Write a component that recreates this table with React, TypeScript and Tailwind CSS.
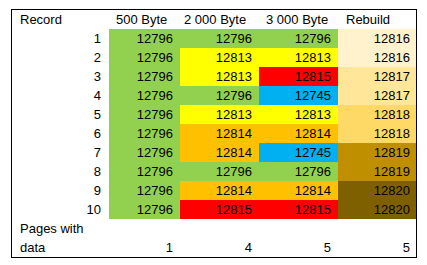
type Row = { n: number; cells: [string, string][]; rebuild: [string, string] };

const G = "bg-[#92d050]";
const Y = "bg-[#ffff00]";
const O = "bg-[#ffc000]";
const R = "bg-[#ff0000]";
const B = "bg-[#00b0f0]";

const rows: Row[] = [
  { n: 1, cells: [["12796", G], ["12796", G], ["12796", G]], rebuild: ["12816", "bg-[#fff2cc]"] },
  { n: 2, cells: [["12796", G], ["12813", Y], ["12813", Y]], rebuild: ["12816", "bg-[#fff2cc]"] },
  { n: 3, cells: [["12796", G], ["12813", Y], ["12815", R]], rebuild: ["12817", "bg-[#ffe699]"] },
  { n: 4, cells: [["12796", G], ["12796", G], ["12745", B]], rebuild: ["12817", "bg-[#ffe699]"] },
  { n: 5, cells: [["12796", G], ["12813", Y], ["12813", Y]], rebuild: ["12818", "bg-[#ffd966]"] },
  { n: 6, cells: [["12796", G], ["12814", O], ["12814", O]], rebuild: ["12818", "bg-[#ffd966]"] },
  { n: 7, cells: [["12796", G], ["12814", O], ["12745", B]], rebuild: ["12819", "bg-[#bf8f00]"] },
  { n: 8, cells: [["12796", G], ["12796", G], ["12796", G]], rebuild: ["12819", "bg-[#bf8f00]"] },
  { n: 9, cells: [["12796", G], ["12814", O], ["12814", O]], rebuild: ["12820", "bg-[#7f6000]"] },
  { n: 10, cells: [["12796", G], ["12815", R], ["12815", R]], rebuild: ["12820", "bg-[#7f6000]"] },
];

export default function App() {
  return (
    <div className="w-[427px] h-[265px] bg-white pt-[9px] pl-[11px] font-['Liberation_Sans',Arial,sans-serif] text-[13px] text-black">
      <div className="w-[406px] border border-black">
        <div className="grid grid-cols-[97px_71px_79px_79px_78px] leading-[19px]">
          {/* header */}
          <div className="h-[19px] pl-[8px]">Record</div>
          <div className="h-[19px] pl-[7px]">500 Byte</div>
          <div className="h-[19px] pl-[4px]">2 000 Byte</div>
          <div className="h-[19px] pl-[7px]">3 000 Byte</div>
          <div className="h-[19px] pl-[8px]">Rebuild</div>

          {rows.map((r) => (
            <div key={r.n} className="contents">
              <div className="h-[19px] pr-[8px] text-right">{r.n}</div>
              {r.cells.map(([v, bg], i) => (
                <div key={i} className={`h-[19px] pr-[7px] text-right ${bg}`}>
                  {v}
                </div>
              ))}
              <div className={`h-[19px] pr-[6px] text-right ${r.rebuild[1]}`}>{r.rebuild[0]}</div>
            </div>
          ))}

          {/* footer */}
          <div className="h-[19px] pl-[8px]">Pages with</div>
          <div className="col-span-4" />
          <div className="h-[19px] pl-[8px]">data</div>
          <div className="h-[19px] pr-[7px] text-right">1</div>
          <div className="h-[19px] pr-[7px] text-right">4</div>
          <div className="h-[19px] pr-[7px] text-right">5</div>
          <div className="h-[19px] pr-[6px] text-right">5</div>
        </div>
      </div>
    </div>
  );
}
